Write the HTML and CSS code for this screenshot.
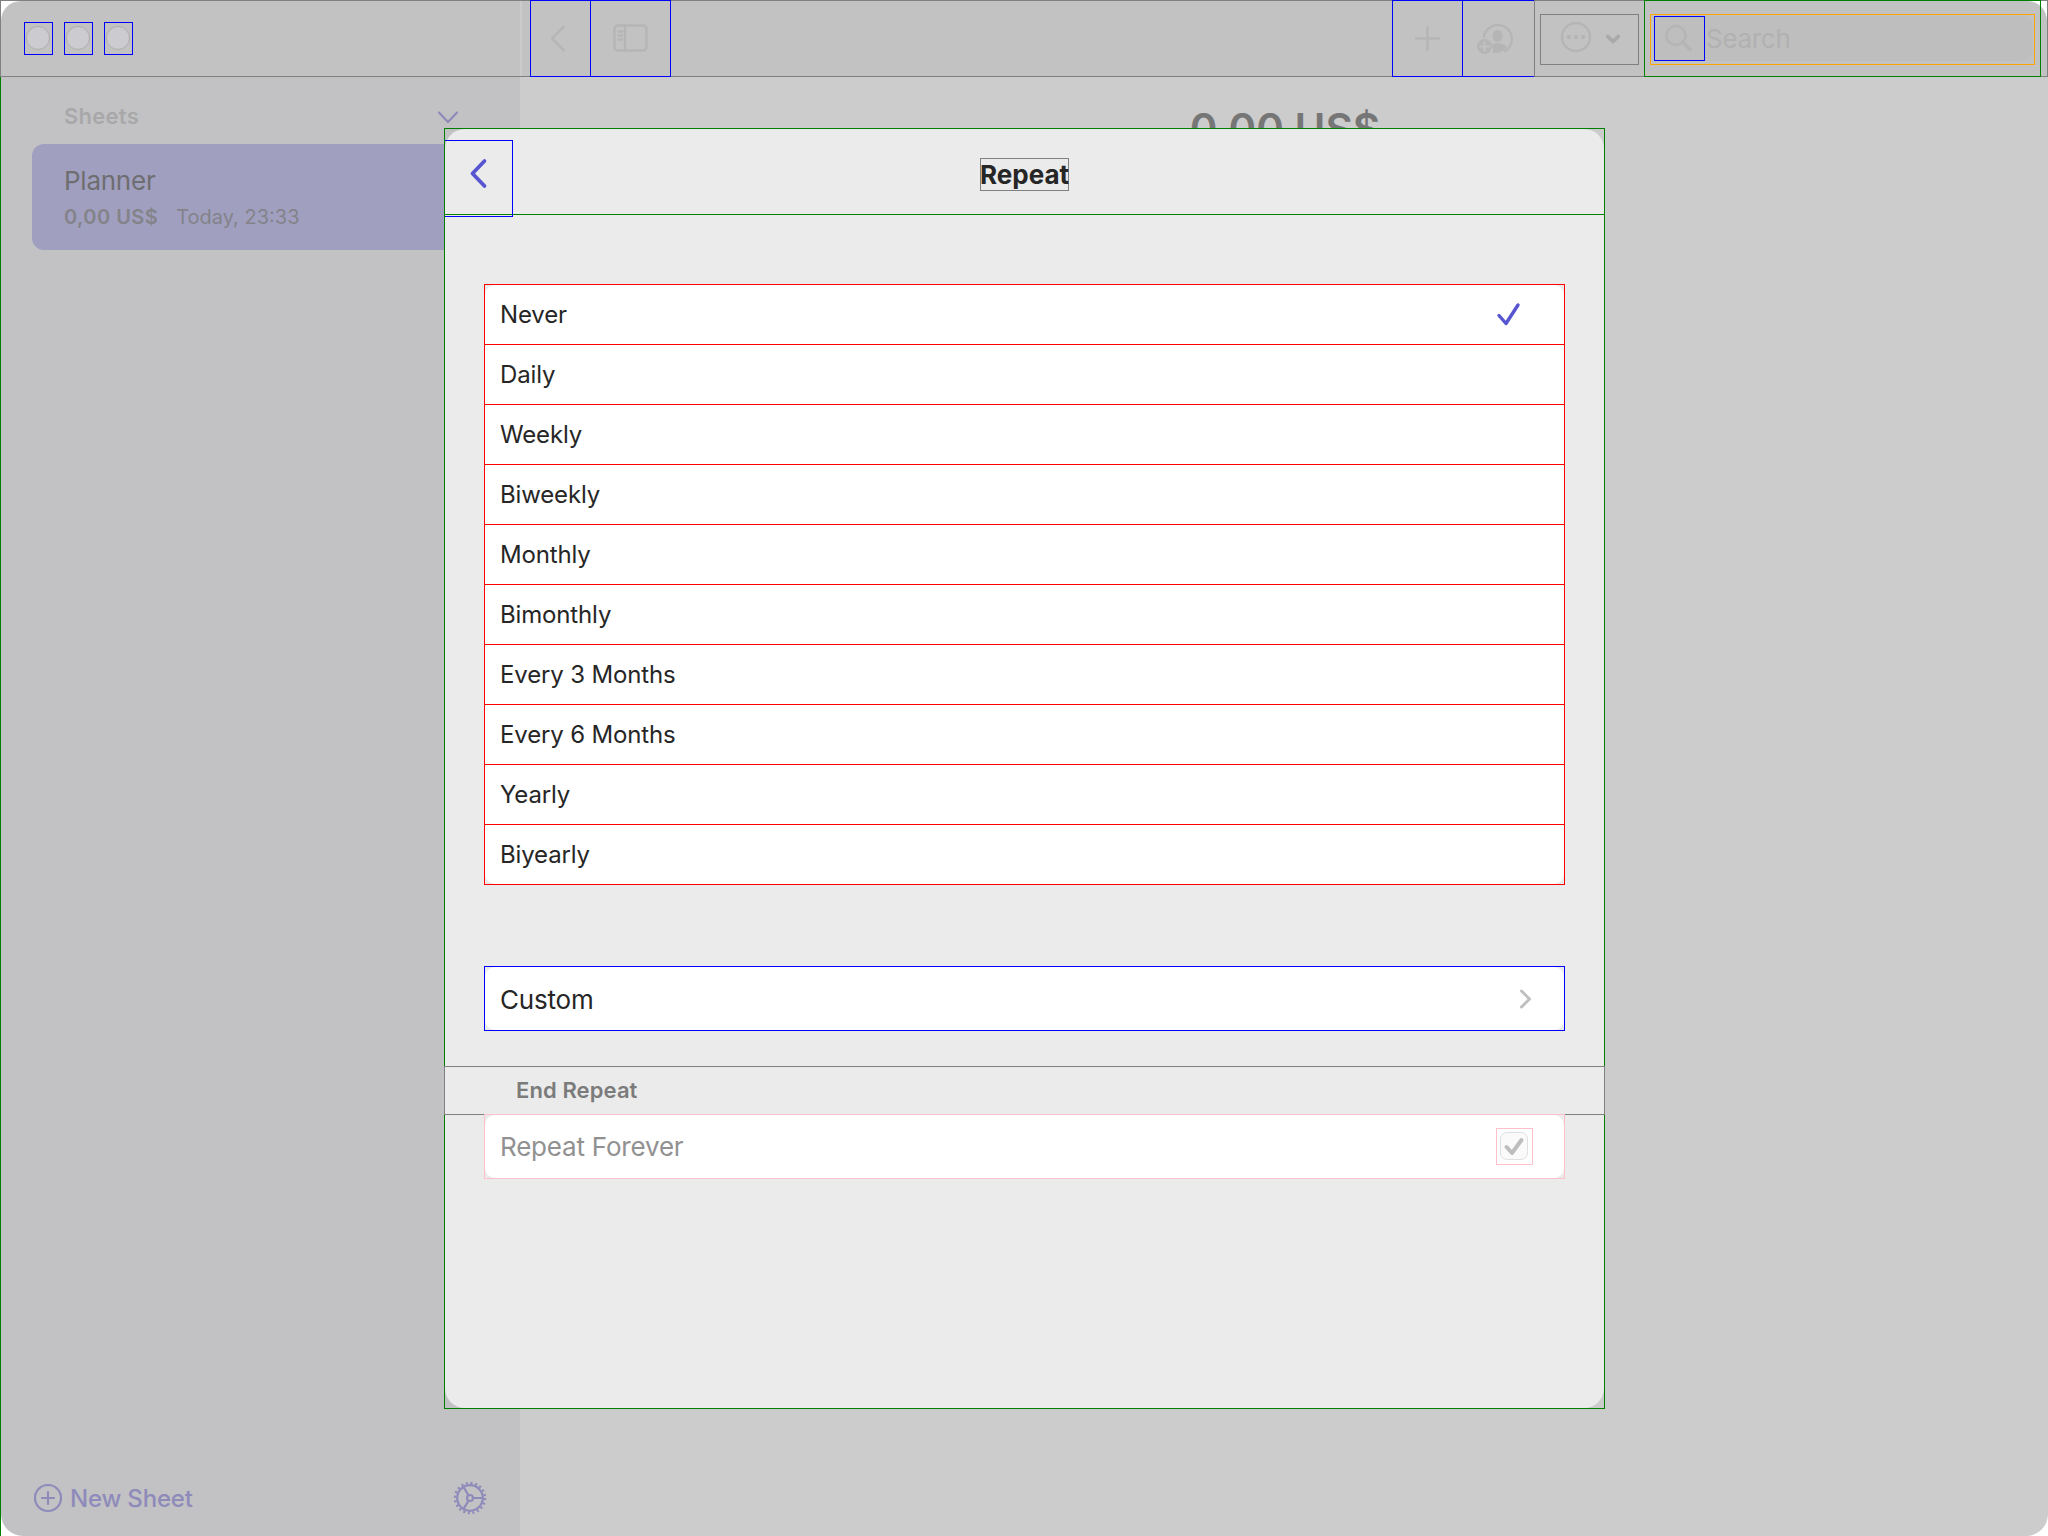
FILE: index.html
```
<!DOCTYPE html>
<html lang="en">
<head>
<meta charset="utf-8">
<title>Planner</title>
<link rel="stylesheet" href="styles.css">
</head>
<body>
<div class="app">
  <header class="toolbar">
    <div class="toolbar-surface">
      <div class="toolbar-side">
        <div class="light"><i></i></div>
        <div class="light"><i></i></div>
        <div class="light"><i></i></div>
      </div>
      <div class="tool tool-back"><svg width="24" height="32" viewBox="0 0 24 32"><path d="M17 3.500 5 15.500 17 27.500" /></svg></div>
      <div class="tool tool-panel"><svg width="40" height="32" viewBox="0 0 40 32"><rect x="3.500" y="2.500" width="32" height="25" rx="3.5"/><path d="M14 2.500v25M7.500 8.500h3.500M7.500 12.500h3.500M7.500 16.500h3.500" /></svg></div>
      <div class="grow"></div>
      <div class="tool tool-add"><svg width="26" height="26" viewBox="0 0 26 26"><path d="M12.500 1v23M1 12.500h23" /></svg></div>
      <div class="tool tool-person"><svg width="40" height="32" viewBox="0 0 40 32">
        <path d="M9 13.500A14 14 0 1 1 30 28" />
        <g class="solid"><ellipse cx="22.500" cy="13" rx="5" ry="6"/><path d="M17.500 30c1.500-4 0-5-.5-8 3-3 10-2.500 15 1.500-3.500 5-8 7-14.500 6.500z"/><circle cx="9.500" cy="23.500" r="7.500"/></g>
        <path class="cut" d="M9.500 19v9M5 23.500h9" />
      </svg></div>
      <div class="tool-more"><div class="more-box"><svg width="80" height="32" viewBox="0 0 80 32">
        <circle cx="16" cy="16" r="14"/><g class="solid"><circle cx="9" cy="16" r="2.200"/><circle cx="16" cy="16" r="2.200"/><circle cx="23" cy="16" r="2.200"/></g>
        <path class="heavy" d="M47.800 15.500 53 20.500l5.200-5" />
      </svg></div></div>
      <div class="search"><div class="search-frame"><div class="search-field">
        <div class="search-icon"><svg width="30" height="30" viewBox="0 0 30 30"><circle cx="12" cy="12.500" r="9.500"/><path class="handle" d="M19 19.500 26 26.500" /></svg></div>
        <span class="search-text">Search</span>
      </div></div></div>
    </div>
  </header>
  <div class="workspace">
    <aside class="sidebar">
      <div class="section"><span class="section-name">Sheets</span><svg width="24" height="16" viewBox="0 0 24 16"><path d="M3 4.500 12 14 21 4.500"/></svg></div>
      <div class="sheet">
        <div class="sheet-name">Planner</div>
        <div class="sheet-meta"><b>0,00 US$</b><span>Today, 23:33</span></div>
      </div>
      <div class="grow"></div>
      <footer class="side-foot">
        <svg width="30" height="30" viewBox="0 0 30 30"><circle cx="15" cy="15" r="13"/><path d="M15 9v12M9 15h12"/></svg>
        <span class="new-sheet">New Sheet</span>
        <svg class="gear" width="36" height="36" viewBox="0 0 36 36"><circle cx="18" cy="18" r="12.800"/><circle cx="18" cy="18" r="3"/><path d="M21 18h10M16.500 15.400 11.500 7M16.500 20.600 11.500 29"/><circle class="teeth" cx="18" cy="18" r="15"/></svg>
      </footer>
    </aside>
    <main class="content"><h1 class="total">0,00 US$</h1></main>
  </div>

  <section class="modal"><div class="modal-surface">
    <header class="modal-head">
      <div class="modal-back"><svg width="24" height="36" viewBox="0 0 24 36"><path d="M18.500 6 6.500 18.500 18.500 31"/></svg></div>
      <h2 class="modal-title">Repeat</h2>
    </header>
    <ul class="options">
      <li><div><span>Never</span><svg width="30" height="30" viewBox="0 0 30 30"><path d="M5 15.500 12 23.500 24 5"/></svg></div></li>
      <li><div><span>Daily</span></div></li>
      <li><div><span>Weekly</span></div></li>
      <li><div><span>Biweekly</span></div></li>
      <li><div><span>Monthly</span></div></li>
      <li><div><span>Bimonthly</span></div></li>
      <li><div><span>Every 3 Months</span></div></li>
      <li><div><span>Every 6 Months</span></div></li>
      <li><div><span>Yearly</span></div></li>
      <li><div><span>Biyearly</span></div></li>
    </ul>
    <div class="row custom"><div class="row-fill"><span>Custom</span><svg width="16" height="24" viewBox="0 0 16 24"><path d="M4.500 4 12.500 12 4.500 20"/></svg></div></div>
    <div class="group-head">End Repeat</div>
    <div class="row forever"><div class="row-fill"><span>Repeat Forever</span><div class="check-frame"><div class="check"><svg width="24" height="24" viewBox="0 0 24 24"><path d="M4.500 13 10 19 19.500 6"/></svg></div></div></div></div>
  </div></section>
</div>
</body>
</html>
```
FILE: styles.css
```
* { box-sizing: border-box; }
body { margin: 0; background: #fff; font-family: Inter, "Liberation Sans", sans-serif; }
svg { display: block; flex: none; fill: none; stroke-linecap: round; stroke-linejoin: round; }
h1, h2, ul { margin: 0; padding: 0; list-style: none; }
.grow { flex: 1; }

.app { position: relative; width: 2048px; height: 1536px; overflow: hidden; display: flex; flex-direction: column; white-space: nowrap; }

/* Toolbar */
.toolbar { height: 77px; border: 1px solid #808080; flex: none; }
.toolbar-surface { display: flex; height: 75px; background: #c2c2c3; border-radius: 20px 20px 0 0; padding-right: 6px; }
.toolbar svg { stroke: #b5b5b6; stroke-width: 2.4; }
.toolbar .solid { fill: #b5b5b6; stroke: none; }
.toolbar-side { width: 521px; border-right: 2px solid #cbcbcc; display: flex; gap: 11px; padding: 21px 0 0 23px; }
.light { width: 29px; height: 33px; border: 1px solid #00f; padding: 3px 0 0 1px; }
.light i { display: block; width: 24px; height: 24px; border-radius: 50%; background: #cccbcf; border: 1px solid #adadae; }
.tool { height: 77px; margin-top: -1px; border: 1px solid #00f; display: flex; align-items: center; justify-content: center; }
.tool-back { width: 61px; margin-left: 8px; padding-right: 3px; }
.tool-panel { width: 81px; margin-left: -1px; }
.tool-add { width: 71px; }
.tool-person { width: 72px; margin-left: -1px; border-right: 0; padding-right: 8px; }
.tool-person .cut { stroke: #c2c2c3; stroke-width: 2; }
.tool-more { width: 110px; border-left: 1px solid #808080; padding: 13px 0 0 5px; }
.more-box { width: 99px; height: 51px; border: 1px solid #808080; padding: 6px 0 0 19px; }
.more-box .heavy { stroke: #a9a9aa; stroke-width: 3.8; }
.search { width: 397px; height: 77px; margin-top: -1px; border: 1px solid #008000; padding: 13px 5px; }
.search-frame { height: 51px; border: 1px solid #ffa500; padding: 1px 1px 0 3px; }
.search-field { height: 45px; background: #bebebf; border-radius: 0 12px 12px 0; display: flex; align-items: center; }
.search-icon { width: 51px; height: 45px; border: 1px solid #00f; padding: 6px 0 0 9px; }
.search-icon .handle { stroke-width: 3.4; }
.search-text { font-size: 26px; letter-spacing: -.3px; color: #b1b1b2; margin-left: 1px; }

/* Sidebar and content */
.workspace { flex: 1; display: flex; border-left: 1px solid #008000; }
.sidebar { width: 519px; background: #c2c2c4; border-radius: 0 0 0 22px; display: flex; flex-direction: column; padding-top: 23px; }
.sidebar svg { stroke: #8e8bbb; stroke-width: 2.2; }
.section { height: 32px; margin: 0 60px 0 63px; display: flex; align-items: center; justify-content: space-between; }
.section-name { font-size: 22px; font-weight: 600; letter-spacing: .25px; color: #a8a8a9; }
.sheet { width: 456px; height: 106px; margin: 12px 0 0 31px; padding: 20px 0 0 32px; border-radius: 12px; background: #a09fbf; }
.sheet-name { font-size: 26px; line-height: 34px; letter-spacing: -.25px; color: #6e6e71; }
.sheet-meta { font-size: 20px; line-height: 26px; margin-top: 6px; color: #838389; display: flex; gap: 18px; }
.sheet-meta b { font-weight: 600; letter-spacing: .45px; }
.side-foot { display: flex; align-items: center; height: 36px; margin: 0 32px 20px 32px; color: #8e8bbb; }
.new-sheet { font-size: 24px; font-weight: 500; letter-spacing: -.2px; margin: 1px 0 0 7px; }
.gear { margin-left: auto; }
.sidebar .gear .teeth { stroke-width: 2.4; stroke-dasharray: 2.1 2.612; stroke-linecap: butt; }
.content { flex: 1; background: #ccc; border-radius: 0 0 22px 0; padding: 25px 0 0 2px; }
.total { font-size: 42px; line-height: 54px; font-weight: 600; text-align: center; color: #767676; }

/* Repeat dialog */
.modal { position: absolute; left: 444px; top: 128px; width: 1161px; height: 1281px; border: 1px solid #008000; background: linear-gradient(90deg, #c2c2c4 75px, #ccc 75px); color: #262626; }
.modal-surface { height: 100%; background: #ebebeb; border-radius: 20px; }
.modal-head { height: 86px; border-bottom: 1px solid #008000; display: grid; grid-template-columns: 1fr auto 1fr; align-items: start; }
.modal-back { width: 68px; height: 77px; margin-top: 11px; border: 1px solid #00f; border-left: 0; padding: 14px 0 0 21px; }
.modal-back svg { stroke: #5755d0; stroke-width: 3.8; }
.modal-title { width: 89px; height: 33px; margin-top: 29px; border: 1px solid #808080; font-size: 26px; line-height: 31px; font-weight: 700; display: flex; justify-content: center; }
.options { margin: 69px 39px 0; }
.options li { height: 61px; border: 1px solid #f00; }
.options li + li { margin-top: -1px; }
.options li > div { height: 59px; background: #fff; display: flex; align-items: center; justify-content: space-between; padding: 0 40px 0 15px; font-size: 24px; letter-spacing: -.15px; }
.options li:first-child > div { border-radius: 10px 10px 0 0; }
.options li:last-child > div { border-radius: 0 0 10px 10px; }
.options svg { stroke: #5755d0; stroke-width: 3.4; }
.row { height: 65px; margin: 0 39px; border: 1px solid #00f; font-size: 26px; letter-spacing: -.2px; }
.row-fill { height: 63px; background: #fff; border-radius: 10px; display: flex; align-items: center; justify-content: space-between; padding-left: 15px; }
.custom { margin-top: 81px; }
.custom .row-fill { padding-right: 31px; }
.custom span { padding-top: 2px; }
.custom svg { stroke: #bfbfbf; stroke-width: 3; }
.group-head { height: 49px; margin: 35px -1px 0; border: 1px solid #808080; padding-left: 71px; font-size: 22px; line-height: 47px; font-weight: 600; letter-spacing: .1px; color: #7b7b7b; }
.forever { position: relative; margin-top: -1px; border-color: #ffc0cb; color: #919191; }
.forever .row-fill { padding-right: 31px; }
.check-frame { width: 37px; height: 37px; border: 1px solid #ffc0cb; padding: 3px; }
.check { width: 28px; height: 28px; border: 1px solid #e0e0e0; border-radius: 7px; background: #fafafa; padding: 1px; }
.check svg { stroke: #bdbdbd; stroke-width: 4; }
```
